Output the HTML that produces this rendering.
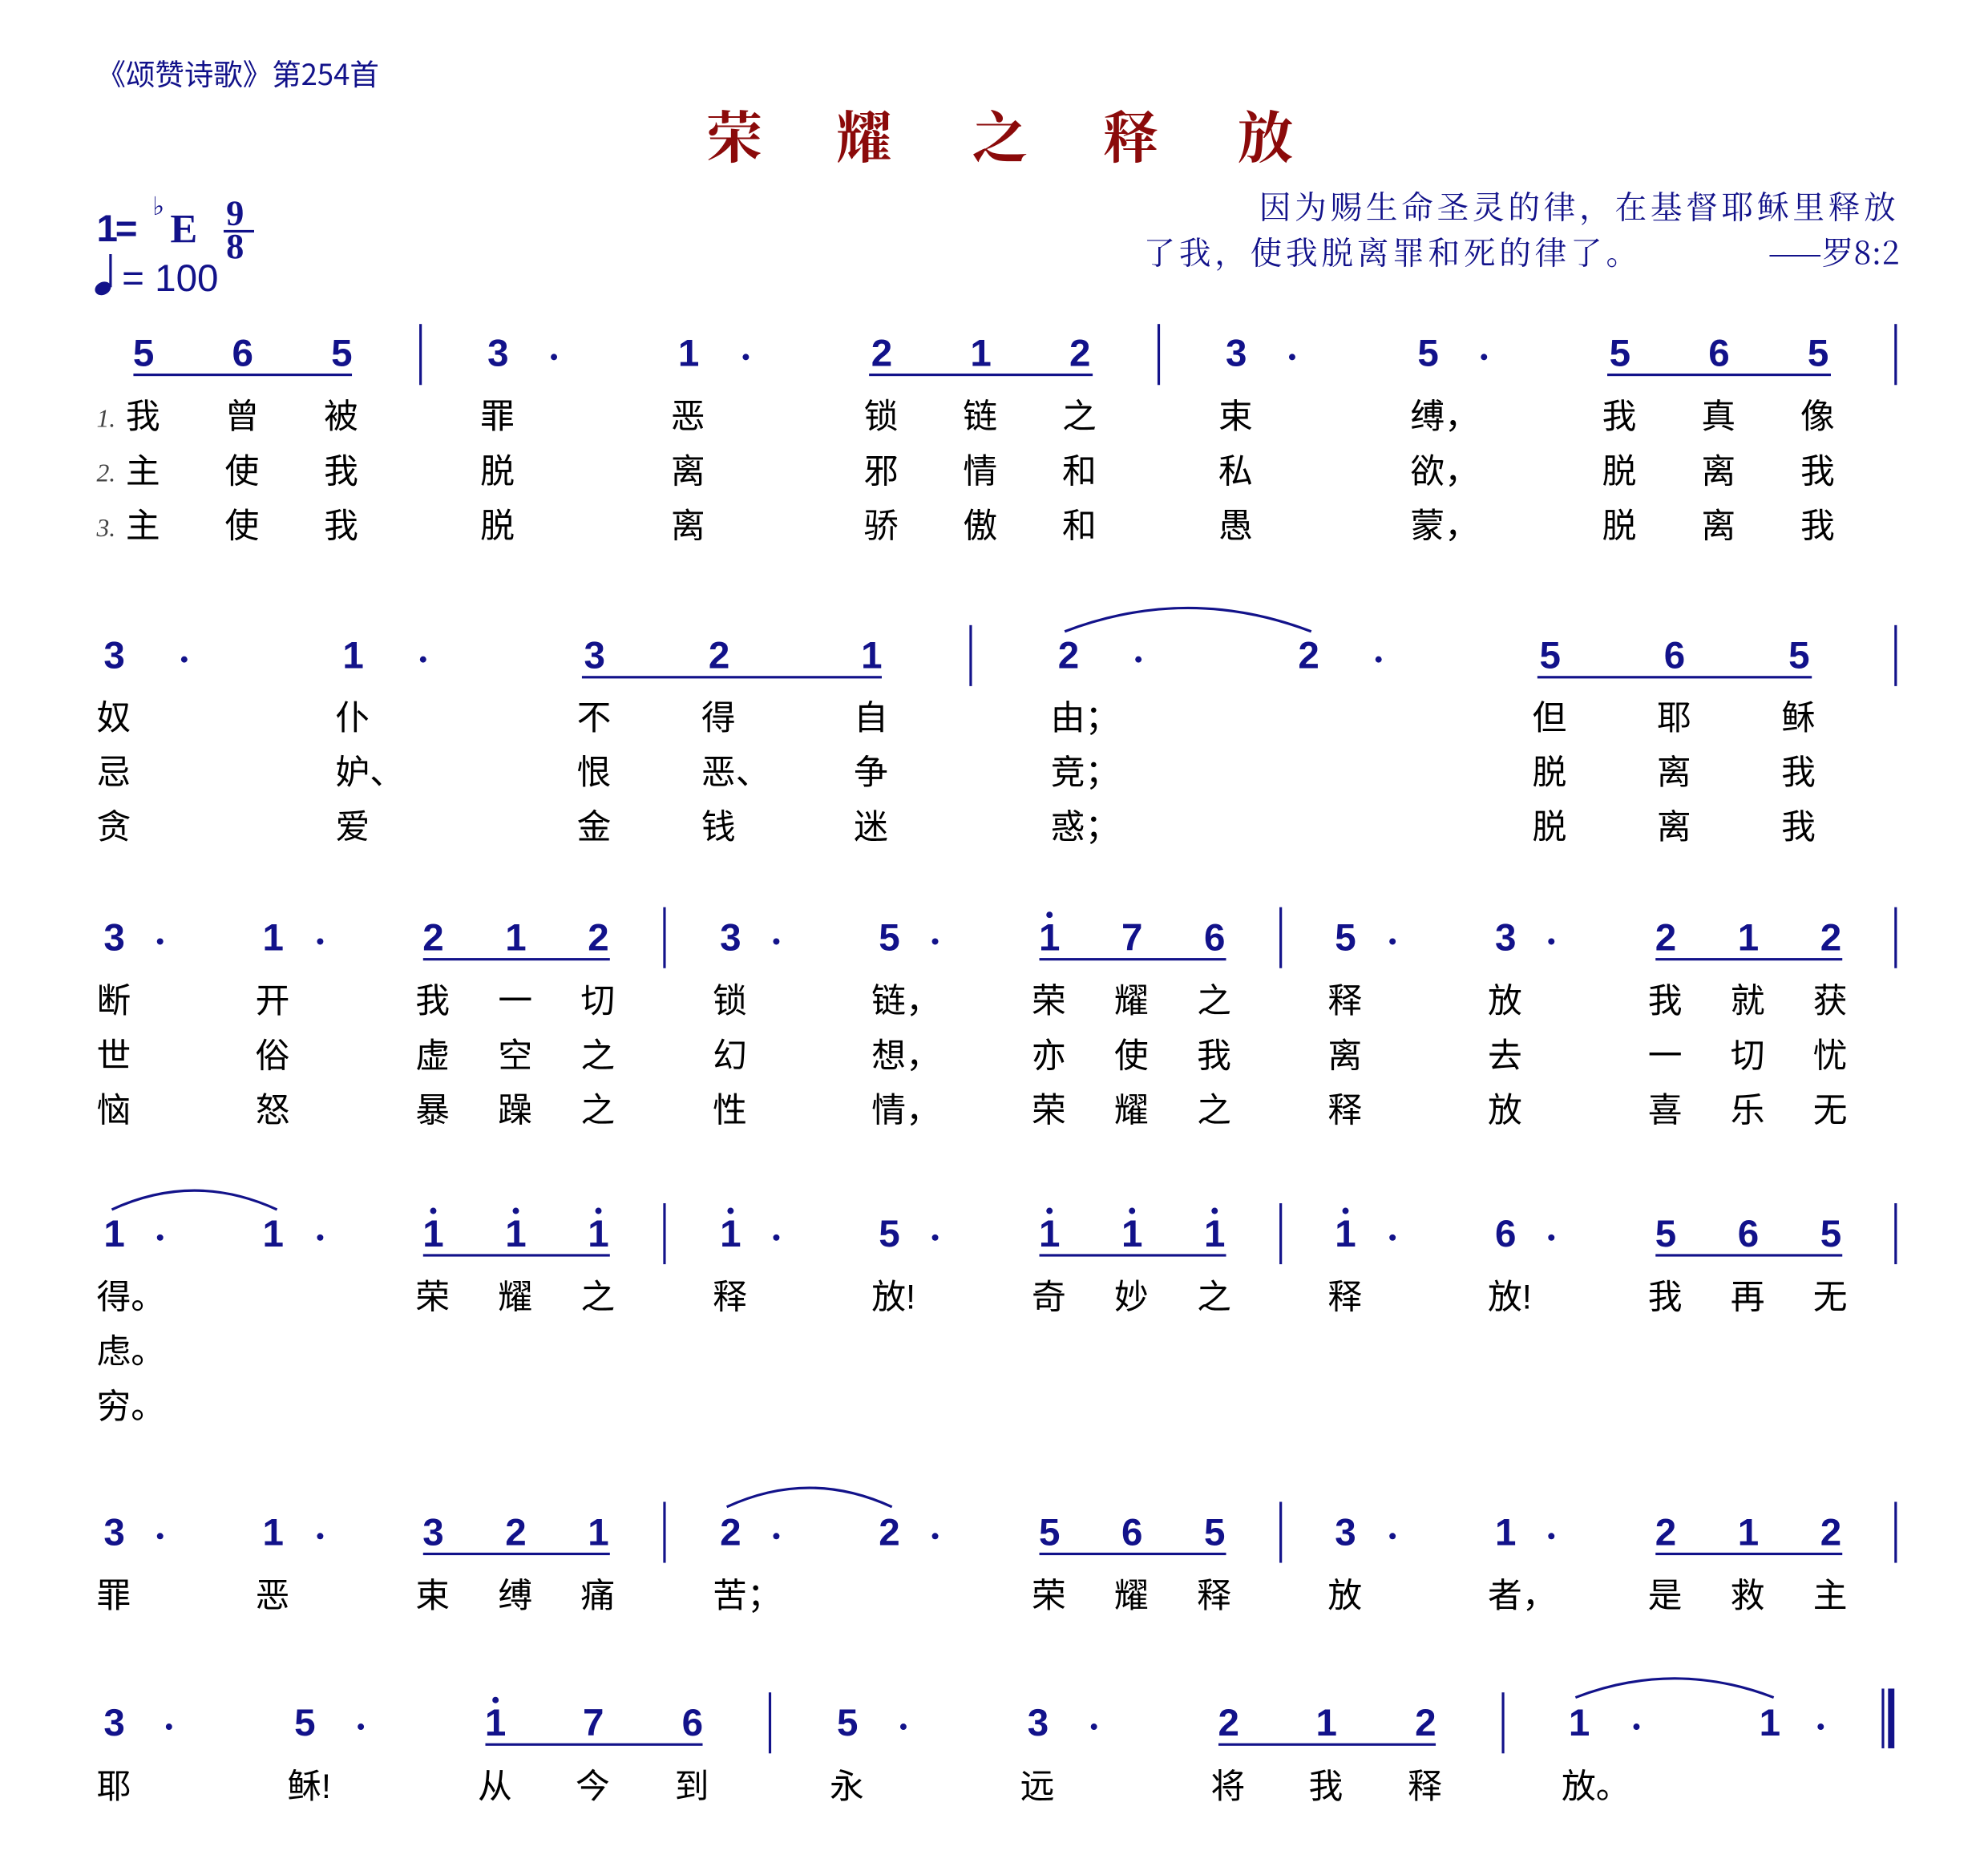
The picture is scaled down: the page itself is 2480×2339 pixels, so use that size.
<!DOCTYPE html>
<html><head><meta charset="utf-8"><style>
html,body{margin:0;padding:0;background:#fff;}
body{width:2480px;height:2339px;overflow:hidden;position:relative;}
#w{position:absolute;left:0;top:0;width:1565px;height:1476px;transform:scale(1.585);transform-origin:0 0;}
.n{position:absolute;font:bold 30px "Liberation Sans",sans-serif;color:#12128a;transform:translate(-50%,-50%);line-height:1;}
.d{position:absolute;width:5px;height:5px;border-radius:50%;background:#12128a;transform:translate(-50%,-50%);}
.u{position:absolute;height:2px;background:#12128a;}
.b{position:absolute;width:2px;height:48px;background:#12128a;}
.l{position:absolute;font:27px "Liberation Sans","Noto Sans CJK SC",sans-serif;color:#000;line-height:1;}
.v{position:absolute;font:italic 20px "Liberation Serif",serif;color:#444;line-height:1;}
.t{position:absolute;font:bold 44px "Noto Serif CJK SC",serif;color:#8b0a0a;line-height:1;transform:translate(-50%,-50%);}
.r{position:absolute;font:25px "Noto Serif CJK SC","Liberation Serif",serif;color:#12128a;line-height:1;letter-spacing:3px;white-space:nowrap;}
</style></head><body><div id="w">
<div style="position:absolute;left:76px;top:46px;font:23px 'Noto Sans CJK SC',sans-serif;color:#12128a;line-height:1;white-space:nowrap">《颂赞诗歌》第254首</div>
<div class="t" style="left:578px;top:105px">荣</div>
<div class="t" style="left:680px;top:105px">耀</div>
<div class="t" style="left:787px;top:105px">之</div>
<div class="t" style="left:890px;top:105px">释</div>
<div class="t" style="left:996px;top:105px">放</div>
<div class="r" style="right:70px;top:150px">因为赐生命圣灵的律，在基督耶稣里释放</div>
<div class="r" style="left:900px;top:186px">了我，使我脱离罪和死的律了。</div>
<div class="r" style="right:70px;top:186px;letter-spacing:0">——罗8:2</div>
<div style="position:absolute;left:76px;top:166px;font:bold 30px 'Liberation Sans';color:#12128a;line-height:1;letter-spacing:-2px">1=</div>
<div style="position:absolute;left:120px;top:152px;font:20px 'DejaVu Sans';color:#12128a;line-height:1">♭</div>
<div style="position:absolute;left:134px;top:164px;font:bold 32px 'Liberation Serif';color:#12128a;line-height:1">E</div>
<div style="position:absolute;left:178px;top:155px;font:bold 28px 'Liberation Serif';color:#12128a;line-height:1">9</div>
<div class="u" style="left:176px;top:181px;width:24px"></div>
<div style="position:absolute;left:178px;top:181px;font:bold 28px 'Liberation Serif';color:#12128a;line-height:1">8</div>
<svg style="position:absolute;left:72px;top:198px" width="20" height="36"><line x1="15" y1="2" x2="15" y2="28" stroke="#12128a" stroke-width="2"/><ellipse cx="9" cy="29" rx="6.5" ry="5" fill="#12128a" transform="rotate(-25 9 29)"/></svg>
<div style="position:absolute;left:96px;top:205px;font:30px 'Liberation Sans';color:#12128a;line-height:1">= 100</div>

<svg style="position:absolute;left:0;top:0" width="1565" height="1476"><g fill="none" stroke="#12128a" stroke-width="2">
<path d="M838 497 Q935 460 1032 497"/>
<path d="M88 952 Q153 922 218 952"/>
<path d="M572 1186 Q637 1156 702 1186"/>
<path d="M1240 1336 Q1318 1306 1396 1336"/>
</g></svg>

<!-- row1 -->
<div class="n" style="left:113px;top:279px">5</div><div class="n" style="left:191px;top:279px">6</div><div class="n" style="left:269px;top:279px">5</div><div class="u" style="left:105px;top:294px;width:172px"></div>
<div class="b" style="left:330px;top:255px"></div>
<div class="n" style="left:392px;top:279px">3</div><div class="d" style="left:436px;top:281px"></div>
<div class="n" style="left:542px;top:279px">1</div><div class="d" style="left:587px;top:281px"></div>
<div class="n" style="left:694px;top:279px">2</div><div class="n" style="left:772px;top:279px">1</div><div class="n" style="left:850px;top:279px">2</div><div class="u" style="left:684px;top:294px;width:176px"></div>
<div class="b" style="left:911px;top:255px"></div>
<div class="n" style="left:973px;top:279px">3</div><div class="d" style="left:1017px;top:281px"></div>
<div class="n" style="left:1124px;top:279px">5</div><div class="d" style="left:1168px;top:281px"></div>
<div class="n" style="left:1275px;top:279px">5</div><div class="n" style="left:1353px;top:279px">6</div><div class="n" style="left:1431px;top:279px">5</div><div class="u" style="left:1265px;top:294px;width:176px"></div>
<div class="b" style="left:1491px;top:255px"></div>
<div class="v" style="left:76px;top:320px">1.</div><div class="v" style="left:76px;top:363px">2.</div><div class="v" style="left:76px;top:406px">3.</div>
<div class="l" style="left:99px;top:315px">我</div><div class="l" style="left:177px;top:315px">曾</div><div class="l" style="left:255px;top:315px">被</div><div class="l" style="left:378px;top:315px">罪</div><div class="l" style="left:528px;top:315px">恶</div><div class="l" style="left:680px;top:315px">锁</div><div class="l" style="left:758px;top:315px">链</div><div class="l" style="left:836px;top:315px">之</div><div class="l" style="left:959px;top:315px">束</div><div class="l" style="left:1110px;top:315px">缚，</div><div class="l" style="left:1261px;top:315px">我</div><div class="l" style="left:1339px;top:315px">真</div><div class="l" style="left:1417px;top:315px">像</div>
<div class="l" style="left:99px;top:358px">主</div><div class="l" style="left:177px;top:358px">使</div><div class="l" style="left:255px;top:358px">我</div><div class="l" style="left:378px;top:358px">脱</div><div class="l" style="left:528px;top:358px">离</div><div class="l" style="left:680px;top:358px">邪</div><div class="l" style="left:758px;top:358px">情</div><div class="l" style="left:836px;top:358px">和</div><div class="l" style="left:959px;top:358px">私</div><div class="l" style="left:1110px;top:358px">欲，</div><div class="l" style="left:1261px;top:358px">脱</div><div class="l" style="left:1339px;top:358px">离</div><div class="l" style="left:1417px;top:358px">我</div>
<div class="l" style="left:99px;top:401px">主</div><div class="l" style="left:177px;top:401px">使</div><div class="l" style="left:255px;top:401px">我</div><div class="l" style="left:378px;top:401px">脱</div><div class="l" style="left:528px;top:401px">离</div><div class="l" style="left:680px;top:401px">骄</div><div class="l" style="left:758px;top:401px">傲</div><div class="l" style="left:836px;top:401px">和</div><div class="l" style="left:959px;top:401px">愚</div><div class="l" style="left:1110px;top:401px">蒙，</div><div class="l" style="left:1261px;top:401px">脱</div><div class="l" style="left:1339px;top:401px">离</div><div class="l" style="left:1417px;top:401px">我</div>

<!-- row2 -->
<div class="n" style="left:90px;top:517px">3</div><div class="d" style="left:145px;top:519px"></div>
<div class="n" style="left:278px;top:517px">1</div><div class="d" style="left:333px;top:519px"></div>
<div class="n" style="left:468px;top:517px">3</div><div class="n" style="left:566px;top:517px">2</div><div class="n" style="left:686px;top:517px">1</div><div class="u" style="left:458px;top:532px;width:236px"></div>
<div class="b" style="left:763px;top:492px"></div>
<div class="n" style="left:841px;top:517px">2</div><div class="d" style="left:896px;top:519px"></div>
<div class="n" style="left:1030px;top:517px">2</div><div class="d" style="left:1085px;top:519px"></div>
<div class="n" style="left:1220px;top:517px">5</div><div class="n" style="left:1318px;top:517px">6</div><div class="n" style="left:1416px;top:517px">5</div><div class="u" style="left:1210px;top:532px;width:216px"></div>
<div class="b" style="left:1491px;top:492px"></div>
<div class="l" style="left:76px;top:552px">奴</div><div class="l" style="left:264px;top:552px">仆</div><div class="l" style="left:454px;top:552px">不</div><div class="l" style="left:552px;top:552px">得</div><div class="l" style="left:672px;top:552px">自</div><div class="l" style="left:827px;top:552px">由；</div><div class="l" style="left:1206px;top:552px">但</div><div class="l" style="left:1304px;top:552px">耶</div><div class="l" style="left:1402px;top:552px">稣</div>
<div class="l" style="left:76px;top:595px">忌</div><div class="l" style="left:264px;top:595px">妒、</div><div class="l" style="left:454px;top:595px">恨</div><div class="l" style="left:552px;top:595px">恶、</div><div class="l" style="left:672px;top:595px">争</div><div class="l" style="left:827px;top:595px">竞；</div><div class="l" style="left:1206px;top:595px">脱</div><div class="l" style="left:1304px;top:595px">离</div><div class="l" style="left:1402px;top:595px">我</div>
<div class="l" style="left:76px;top:638px">贪</div><div class="l" style="left:264px;top:638px">爱</div><div class="l" style="left:454px;top:638px">金</div><div class="l" style="left:552px;top:638px">钱</div><div class="l" style="left:672px;top:638px">迷</div><div class="l" style="left:827px;top:638px">惑；</div><div class="l" style="left:1206px;top:638px">脱</div><div class="l" style="left:1304px;top:638px">离</div><div class="l" style="left:1402px;top:638px">我</div>

<!-- row3 -->
<div class="n" style="left:90px;top:739px">3</div><div class="d" style="left:126px;top:741px"></div>
<div class="n" style="left:215px;top:739px">1</div><div class="d" style="left:252px;top:741px"></div>
<div class="n" style="left:341px;top:739px">2</div><div class="n" style="left:406px;top:739px">1</div><div class="n" style="left:471px;top:739px">2</div><div class="u" style="left:333px;top:754px;width:147px"></div>
<div class="b" style="left:522px;top:714px"></div>
<div class="n" style="left:575px;top:739px">3</div><div class="d" style="left:611px;top:741px"></div>
<div class="n" style="left:700px;top:739px">5</div><div class="d" style="left:736px;top:741px"></div>
<div class="n" style="left:826px;top:739px">1</div><div class="d" style="left:826px;top:720px"></div><div class="n" style="left:891px;top:739px">7</div><div class="n" style="left:956px;top:739px">6</div><div class="u" style="left:818px;top:754px;width:147px"></div>
<div class="b" style="left:1007px;top:714px"></div>
<div class="n" style="left:1059px;top:739px">5</div><div class="d" style="left:1096px;top:741px"></div>
<div class="n" style="left:1185px;top:739px">3</div><div class="d" style="left:1221px;top:741px"></div>
<div class="n" style="left:1311px;top:739px">2</div><div class="n" style="left:1376px;top:739px">1</div><div class="n" style="left:1441px;top:739px">2</div><div class="u" style="left:1303px;top:754px;width:147px"></div>
<div class="b" style="left:1491px;top:714px"></div>
<div class="l" style="left:76px;top:775px">断</div><div class="l" style="left:201px;top:775px">开</div><div class="l" style="left:327px;top:775px">我</div><div class="l" style="left:392px;top:775px">一</div><div class="l" style="left:457px;top:775px">切</div><div class="l" style="left:561px;top:775px">锁</div><div class="l" style="left:686px;top:775px">链，</div><div class="l" style="left:812px;top:775px">荣</div><div class="l" style="left:877px;top:775px">耀</div><div class="l" style="left:942px;top:775px">之</div><div class="l" style="left:1045px;top:775px">释</div><div class="l" style="left:1171px;top:775px">放</div><div class="l" style="left:1297px;top:775px">我</div><div class="l" style="left:1362px;top:775px">就</div><div class="l" style="left:1427px;top:775px">获</div>
<div class="l" style="left:76px;top:818px">世</div><div class="l" style="left:201px;top:818px">俗</div><div class="l" style="left:327px;top:818px">虚</div><div class="l" style="left:392px;top:818px">空</div><div class="l" style="left:457px;top:818px">之</div><div class="l" style="left:561px;top:818px">幻</div><div class="l" style="left:686px;top:818px">想，</div><div class="l" style="left:812px;top:818px">亦</div><div class="l" style="left:877px;top:818px">使</div><div class="l" style="left:942px;top:818px">我</div><div class="l" style="left:1045px;top:818px">离</div><div class="l" style="left:1171px;top:818px">去</div><div class="l" style="left:1297px;top:818px">一</div><div class="l" style="left:1362px;top:818px">切</div><div class="l" style="left:1427px;top:818px">忧</div>
<div class="l" style="left:76px;top:861px">恼</div><div class="l" style="left:201px;top:861px">怒</div><div class="l" style="left:327px;top:861px">暴</div><div class="l" style="left:392px;top:861px">躁</div><div class="l" style="left:457px;top:861px">之</div><div class="l" style="left:561px;top:861px">性</div><div class="l" style="left:686px;top:861px">情，</div><div class="l" style="left:812px;top:861px">荣</div><div class="l" style="left:877px;top:861px">耀</div><div class="l" style="left:942px;top:861px">之</div><div class="l" style="left:1045px;top:861px">释</div><div class="l" style="left:1171px;top:861px">放</div><div class="l" style="left:1297px;top:861px">喜</div><div class="l" style="left:1362px;top:861px">乐</div><div class="l" style="left:1427px;top:861px">无</div>

<!-- row4 -->
<div class="n" style="left:90px;top:972px">1</div><div class="d" style="left:126px;top:974px"></div>
<div class="n" style="left:215px;top:972px">1</div><div class="d" style="left:252px;top:974px"></div>
<div class="n" style="left:341px;top:972px">1</div><div class="d" style="left:341px;top:953px"></div><div class="n" style="left:406px;top:972px">1</div><div class="d" style="left:406px;top:953px"></div><div class="n" style="left:471px;top:972px">1</div><div class="d" style="left:471px;top:953px"></div><div class="u" style="left:333px;top:987px;width:147px"></div>
<div class="b" style="left:522px;top:947px"></div>
<div class="n" style="left:575px;top:972px">1</div><div class="d" style="left:575px;top:953px"></div><div class="d" style="left:611px;top:974px"></div>
<div class="n" style="left:700px;top:972px">5</div><div class="d" style="left:736px;top:974px"></div>
<div class="n" style="left:826px;top:972px">1</div><div class="d" style="left:826px;top:953px"></div><div class="n" style="left:891px;top:972px">1</div><div class="d" style="left:891px;top:953px"></div><div class="n" style="left:956px;top:972px">1</div><div class="d" style="left:956px;top:953px"></div><div class="u" style="left:818px;top:987px;width:147px"></div>
<div class="b" style="left:1007px;top:947px"></div>
<div class="n" style="left:1059px;top:972px">1</div><div class="d" style="left:1059px;top:953px"></div><div class="d" style="left:1096px;top:974px"></div>
<div class="n" style="left:1185px;top:972px">6</div><div class="d" style="left:1221px;top:974px"></div>
<div class="n" style="left:1311px;top:972px">5</div><div class="n" style="left:1376px;top:972px">6</div><div class="n" style="left:1441px;top:972px">5</div><div class="u" style="left:1303px;top:987px;width:147px"></div>
<div class="b" style="left:1491px;top:947px"></div>
<div class="l" style="left:76px;top:1008px">得。</div><div class="l" style="left:327px;top:1008px">荣</div><div class="l" style="left:392px;top:1008px">耀</div><div class="l" style="left:457px;top:1008px">之</div><div class="l" style="left:561px;top:1008px">释</div><div class="l" style="left:686px;top:1008px">放!</div><div class="l" style="left:812px;top:1008px">奇</div><div class="l" style="left:877px;top:1008px">妙</div><div class="l" style="left:942px;top:1008px">之</div><div class="l" style="left:1045px;top:1008px">释</div><div class="l" style="left:1171px;top:1008px">放!</div><div class="l" style="left:1297px;top:1008px">我</div><div class="l" style="left:1362px;top:1008px">再</div><div class="l" style="left:1427px;top:1008px">无</div>
<div class="l" style="left:76px;top:1051px">虑。</div>
<div class="l" style="left:76px;top:1094px">穷。</div>

<!-- row5 -->
<div class="n" style="left:90px;top:1207px">3</div><div class="d" style="left:126px;top:1209px"></div>
<div class="n" style="left:215px;top:1207px">1</div><div class="d" style="left:252px;top:1209px"></div>
<div class="n" style="left:341px;top:1207px">3</div><div class="n" style="left:406px;top:1207px">2</div><div class="n" style="left:471px;top:1207px">1</div><div class="u" style="left:333px;top:1222px;width:147px"></div>
<div class="b" style="left:522px;top:1182px"></div>
<div class="n" style="left:575px;top:1207px">2</div><div class="d" style="left:611px;top:1209px"></div>
<div class="n" style="left:700px;top:1207px">2</div><div class="d" style="left:736px;top:1209px"></div>
<div class="n" style="left:826px;top:1207px">5</div><div class="n" style="left:891px;top:1207px">6</div><div class="n" style="left:956px;top:1207px">5</div><div class="u" style="left:818px;top:1222px;width:147px"></div>
<div class="b" style="left:1007px;top:1182px"></div>
<div class="n" style="left:1059px;top:1207px">3</div><div class="d" style="left:1096px;top:1209px"></div>
<div class="n" style="left:1185px;top:1207px">1</div><div class="d" style="left:1221px;top:1209px"></div>
<div class="n" style="left:1311px;top:1207px">2</div><div class="n" style="left:1376px;top:1207px">1</div><div class="n" style="left:1441px;top:1207px">2</div><div class="u" style="left:1303px;top:1222px;width:147px"></div>
<div class="b" style="left:1491px;top:1182px"></div>
<div class="l" style="left:76px;top:1243px">罪</div><div class="l" style="left:201px;top:1243px">恶</div><div class="l" style="left:327px;top:1243px">束</div><div class="l" style="left:392px;top:1243px">缚</div><div class="l" style="left:457px;top:1243px">痛</div><div class="l" style="left:561px;top:1243px">苦；</div><div class="l" style="left:812px;top:1243px">荣</div><div class="l" style="left:877px;top:1243px">耀</div><div class="l" style="left:942px;top:1243px">释</div><div class="l" style="left:1045px;top:1243px">放</div><div class="l" style="left:1171px;top:1243px">者，</div><div class="l" style="left:1297px;top:1243px">是</div><div class="l" style="left:1362px;top:1243px">救</div><div class="l" style="left:1427px;top:1243px">主</div>

<!-- row6 -->
<div class="n" style="left:90px;top:1357px">3</div><div class="d" style="left:133px;top:1359px"></div>
<div class="n" style="left:240px;top:1357px">5</div><div class="d" style="left:284px;top:1359px"></div>
<div class="n" style="left:390px;top:1357px">1</div><div class="d" style="left:390px;top:1338px"></div><div class="n" style="left:467px;top:1357px">7</div><div class="n" style="left:545px;top:1357px">6</div><div class="u" style="left:382px;top:1372px;width:171px"></div>
<div class="b" style="left:605px;top:1332px"></div>
<div class="n" style="left:667px;top:1357px">5</div><div class="d" style="left:711px;top:1359px"></div>
<div class="n" style="left:817px;top:1357px">3</div><div class="d" style="left:861px;top:1359px"></div>
<div class="n" style="left:967px;top:1357px">2</div><div class="n" style="left:1044px;top:1357px">1</div><div class="n" style="left:1122px;top:1357px">2</div><div class="u" style="left:959px;top:1372px;width:171px"></div>
<div class="b" style="left:1182px;top:1332px"></div>
<div class="n" style="left:1243px;top:1357px">1</div><div class="d" style="left:1288px;top:1359px"></div>
<div class="n" style="left:1393px;top:1357px">1</div><div class="d" style="left:1433px;top:1359px"></div>
<div class="b" style="left:1481px;top:1329px;width:2px;height:47px"></div>
<div class="b" style="left:1486px;top:1329px;width:5px;height:47px"></div>
<div class="l" style="left:76px;top:1393px">耶</div><div class="l" style="left:226px;top:1393px">稣!</div><div class="l" style="left:376px;top:1393px">从</div><div class="l" style="left:453px;top:1393px">今</div><div class="l" style="left:531px;top:1393px">到</div><div class="l" style="left:653px;top:1393px">永</div><div class="l" style="left:803px;top:1393px">远</div><div class="l" style="left:953px;top:1393px">将</div><div class="l" style="left:1030px;top:1393px">我</div><div class="l" style="left:1108px;top:1393px">释</div><div class="l" style="left:1229px;top:1393px">放。</div>
</div></body></html>
